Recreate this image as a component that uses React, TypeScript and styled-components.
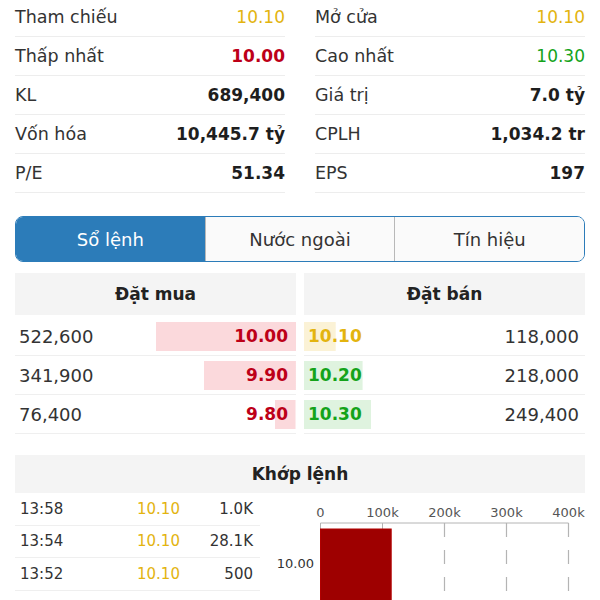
import React from 'react';
import styled, { createGlobalStyle } from 'styled-components';

type Tone = 'ref' | 'down' | 'up' | 'plain';

const toneColor = (t: Tone) =>
  t === 'ref' ? '#e3b40f' : t === 'down' ? '#bd0018' : t === 'up' ? '#14a31a' : '#1e1e1e';

const GlobalStyle = createGlobalStyle`
  html, body { margin: 0; padding: 0; background: #fff; overflow: hidden; }
  body { font-family: "DejaVu Sans", "Noto Sans", sans-serif; color: #333; }
`;

const Page = styled.div`
  width: 600px;
  height: 600px;
  overflow: hidden;
  box-sizing: border-box;
  padding: 0 15px;
`;

const Stats = styled.div`
  display: grid;
  grid-template-columns: 1fr 1fr;
  column-gap: 30px;
  margin-top: -2px;
`;

const StatRow = styled.div`
  height: 39px;
  box-sizing: border-box;
  border-bottom: 1px solid #ededed;
  display: flex;
  align-items: center;
  justify-content: space-between;
`;

const StatLabel = styled.span`
  font-size: 17.5px;
  color: #333;
`;

const StatValue = styled.span<{ $tone: Tone; $bold: boolean }>`
  font-size: 17px;
  font-weight: ${(p) => (p.$bold ? 700 : 400)};
  color: ${(p) => toneColor(p.$tone)};
`;

const Tabs = styled.div`
  margin-top: 23px;
  display: flex;
  height: 46px;
  box-sizing: border-box;
  border: 1px solid #2c7cb9;
  border-radius: 8px;
  overflow: hidden;
`;

const Tab = styled.div<{ $active: boolean }>`
  flex: 1;
  display: flex;
  align-items: center;
  justify-content: center;
  font-size: 18px;
  background: ${(p) => (p.$active ? '#2c7cb9' : '#fafafa')};
  color: ${(p) => (p.$active ? '#fff' : '#333')};
  & + & {
    border-left: 1px solid #b8b8b8;
  }
`;

const Book = styled.div`
  margin-top: 11px;
  display: grid;
  grid-template-columns: 1fr 1fr;
  column-gap: 8px;
`;

const SideHeader = styled.div`
  height: 42px;
  margin-bottom: 2px;
  background: #f4f4f4;
  display: flex;
  align-items: center;
  justify-content: center;
  font-size: 17px;
  font-weight: 700;
  color: #222;
`;

const BookRow = styled.div<{ $side: 'buy' | 'sell'; $tone: Tone }>`
  height: 39px;
  box-sizing: border-box;
  border-bottom: 1px solid #efefef;
  display: flex;
  align-items: center;
  justify-content: space-between;
  padding: ${(p) => (p.$side === 'buy' ? '0 8px 0 4px' : '0 6px 0 4px')};
  background-image: linear-gradient(
    ${(p) => (p.$tone === 'down' ? '#fbd9dc' : p.$tone === 'ref' ? '#fbf2d6' : '#dff3df')},
    ${(p) => (p.$tone === 'down' ? '#fbd9dc' : p.$tone === 'ref' ? '#fbf2d6' : '#dff3df')}
  );
  background-repeat: no-repeat;
  background-position: ${(p) => (p.$side === 'buy' ? 'right center' : 'left center')};
`;

const Qty = styled.span`
  font-size: 18px;
  color: #333;
`;

const Price = styled.span<{ $tone: Tone }>`
  font-size: 17px;
  font-weight: 700;
  color: ${(p) => toneColor(p.$tone)};
`;

const MatchHeader = styled.div`
  margin-top: 21px;
  height: 38px;
  background: #f4f4f4;
  display: flex;
  align-items: center;
  justify-content: center;
  font-size: 17px;
  font-weight: 700;
  color: #222;
`;

const MatchBody = styled.div`
  display: flex;
`;

const TradeTable = styled.div`
  width: 245px;
  flex: none;
`;

const TradeRow = styled.div`
  height: 32.5px;
  box-sizing: border-box;
  border-bottom: 1px solid #efefef;
  display: grid;
  grid-template-columns: 117px 1fr auto;
  align-items: center;
  padding: 0 7px 0 5px;
  font-size: 15px;
  color: #333;
`;

const TradePrice = styled.span<{ $tone: Tone }>`
  color: ${(p) => toneColor(p.$tone)};
`;

const ChartWrap = styled.div`
  flex: 1;
  height: 110px;
`;

const stats: [string, string, Tone, boolean][] = [
  ['Tham chiếu', '10.10', 'ref', false],
  ['Mở cửa', '10.10', 'ref', false],
  ['Thấp nhất', '10.00', 'down', true],
  ['Cao nhất', '10.30', 'up', false],
  ['KL', '689,400', 'plain', true],
  ['Giá trị', '7.0 tỷ', 'plain', true],
  ['Vốn hóa', '10,445.7 tỷ', 'plain', true],
  ['CPLH', '1,034.2 tr', 'plain', true],
  ['P/E', '51.34', 'plain', true],
  ['EPS', '197', 'plain', true],
];

const buys: { qty: number; price: string; tone: Tone }[] = [
  { qty: 522600, price: '10.00', tone: 'down' },
  { qty: 341900, price: '9.90', tone: 'down' },
  { qty: 76400, price: '9.80', tone: 'down' },
];

const sells: { qty: number; price: string; tone: Tone }[] = [
  { qty: 118000, price: '10.10', tone: 'ref' },
  { qty: 218000, price: '10.20', tone: 'up' },
  { qty: 249400, price: '10.30', tone: 'up' },
];

const trades: [string, string, string][] = [
  ['13:58', '10.10', '1.0K'],
  ['13:54', '10.10', '28.1K'],
  ['13:52', '10.10', '500'],
];

const maxQty = Math.max(...buys.map((b) => b.qty), ...sells.map((s) => s.qty));
const fmt = (n: number) => n.toLocaleString('en-US');

const Chart: React.FC = () => {
  const x0 = 60.5;
  const perK = 0.62;
  const ticks = [0, 100, 200, 300, 400];
  const barK = 114;
  return (
    <svg width="325" height="110" viewBox="0 0 325 110">
      {ticks.map((t) => (
        <text
          key={t}
          x={x0 + t * perK}
          y={23.5}
          textAnchor="middle"
          fontSize="13"
          fill="#555"
          fontFamily="DejaVu Sans, sans-serif"
        >
          {t === 0 ? '0' : `${t}k`}
        </text>
      ))}
      <line x1={x0} y1={30} x2={x0 + 400 * perK} y2={30} stroke="#b4b4b4" strokeWidth="1" />
      <line x1={x0} y1={30} x2={x0} y2={37} stroke="#b4b4b4" strokeWidth="1" />
      <line x1={x0 + 100 * perK} y1={30} x2={x0 + 100 * perK} y2={37} stroke="#b4b4b4" strokeWidth="1" />
      {[200, 300, 400].map((t) => (
        <line
          key={t}
          x1={x0 + t * perK}
          y1={30}
          x2={x0 + t * perK}
          y2={110}
          stroke="#b4b4b4"
          strokeWidth="1.2"
          strokeDasharray="14 13"
        />
      ))}
      <rect x={x0} y={36} width={barK * perK} height={80} fill="#9e0000" stroke="#b20000" strokeWidth="1" />
      <text x={54} y={74.5} textAnchor="end" fontSize="13" fill="#333" fontFamily="DejaVu Sans, sans-serif">
        10.00
      </text>
    </svg>
  );
};

export default function App() {
  return (
    <>
      <GlobalStyle />
      <Page>
        <Stats>
          {stats.map(([label, value, tone, bold]) => (
            <StatRow key={label}>
              <StatLabel>{label}</StatLabel>
              <StatValue $tone={tone} $bold={bold}>
                {value}
              </StatValue>
            </StatRow>
          ))}
        </Stats>

        <Tabs>
          <Tab $active>Sổ lệnh</Tab>
          <Tab $active={false}>Nước ngoài</Tab>
          <Tab $active={false}>Tín hiệu</Tab>
        </Tabs>

        <Book>
          <div>
            <SideHeader>Đặt mua</SideHeader>
            {buys.map((b) => (
              <BookRow
                key={b.price}
                $side="buy"
                $tone={b.tone}
                style={{ backgroundSize: `${(b.qty / maxQty) * 50}% 29px` }}
              >
                <Qty>{fmt(b.qty)}</Qty>
                <Price $tone={b.tone}>{b.price}</Price>
              </BookRow>
            ))}
          </div>
          <div>
            <SideHeader>Đặt bán</SideHeader>
            {sells.map((s) => (
              <BookRow
                key={s.price}
                $side="sell"
                $tone={s.tone}
                style={{ backgroundSize: `${(s.qty / maxQty) * 50}% 29px` }}
              >
                <Price $tone={s.tone}>{s.price}</Price>
                <Qty>{fmt(s.qty)}</Qty>
              </BookRow>
            ))}
          </div>
        </Book>

        <MatchHeader>Khớp lệnh</MatchHeader>
        <MatchBody>
          <TradeTable>
            {trades.map(([time, price, vol]) => (
              <TradeRow key={time}>
                <span>{time}</span>
                <TradePrice $tone="ref">{price}</TradePrice>
                <span>{vol}</span>
              </TradeRow>
            ))}
          </TradeTable>
          <ChartWrap>
            <Chart />
          </ChartWrap>
        </MatchBody>
      </Page>
    </>
  );
}
